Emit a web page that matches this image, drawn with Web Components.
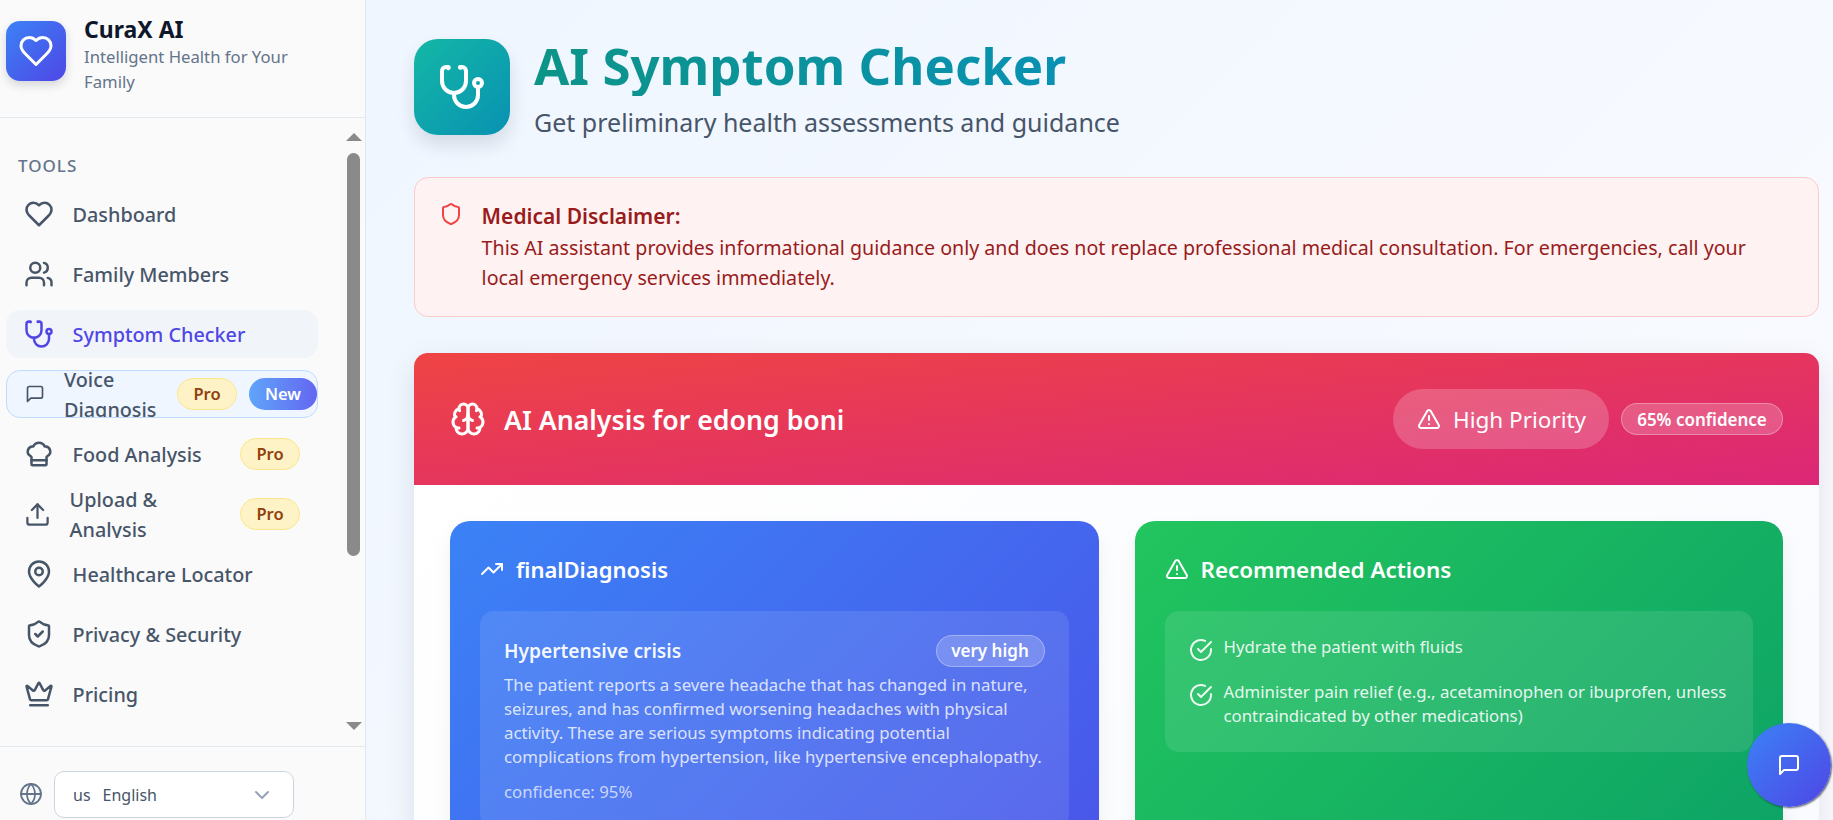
<!DOCTYPE html>
<html>
<head>
<meta charset="utf-8">
<title>CuraX AI</title>
<style>
  html, body { margin: 0; height: 100%; overflow: hidden; }
  body { font-family: "Noto Sans", "Open Sans", sans-serif; color: #0f172a; }
</style>
</head>
<body>
<curax-app></curax-app>

<script>
// lucide style outlines, shared by all the elements
const ICONS = {
  heart: '<path d="M19 14c1.49-1.46 3-3.21 3-5.5A5.5 5.5 0 0 0 16.5 3c-1.76 0-3 .5-4.5 2-1.5-1.5-2.74-2-4.5-2A5.5 5.5 0 0 0 2 8.5c0 2.3 1.5 4.05 3 5.5l7 7Z"/>',
  users: '<path d="M16 21v-2a4 4 0 0 0-4-4H6a4 4 0 0 0-4 4v2"/><path d="M16 3.13a4 4 0 0 1 0 7.75"/><path d="M22 21v-2a4 4 0 0 0-3-3.87"/><circle cx="9" cy="7" r="4"/>',
  stethoscope: '<path d="M4.8 2.3A.3.3 0 1 0 5 2H4a2 2 0 0 0-2 2v5a6 6 0 0 0 6 6 6 6 0 0 0 6-6V4a2 2 0 0 0-2-2h-1a.2.2 0 1 0 .3.3"/><path d="M8 15v1a6 6 0 0 0 6 6 6 6 0 0 0 6-6v-4"/><circle cx="20" cy="10" r="2"/>',
  message: '<path d="M21 15a2 2 0 0 1-2 2H7l-4 4V5a2 2 0 0 1 2-2h14a2 2 0 0 1 2 2z"/>',
  chef: '<path d="M17 21a1 1 0 0 0 1-1v-5.35c0-.457.316-.844.727-1.041a4 4 0 0 0-2.134-7.589 5 5 0 0 0-9.186 0 4 4 0 0 0-2.134 7.589c.411.198.727.585.727 1.041V20a1 1 0 0 0 1 1Z"/><path d="M6 17h12"/>',
  upload: '<path d="M21 15v4a2 2 0 0 1-2 2H5a2 2 0 0 1-2-2v-4"/><polyline points="17 8 12 3 7 8"/><line x1="12" x2="12" y1="3" y2="15"/>',
  pin: '<path d="M20 10c0 6-8 12-8 12s-8-6-8-12a8 8 0 0 1 16 0Z"/><circle cx="12" cy="10" r="3"/>',
  shieldCheck: '<path d="M20 13c0 5-3.5 7.5-7.66 8.95a1 1 0 0 1-.67-.01C7.5 20.5 4 18 4 13V6a1 1 0 0 1 1-1c2 0 4.5-1.2 6.24-2.72a1.17 1.17 0 0 1 1.52 0C14.51 3.81 17 5 19 5a1 1 0 0 1 1 1z"/><path d="m9 12 2 2 4-4"/>',
  shield: '<path d="M20 13c0 5-3.5 7.5-7.66 8.95a1 1 0 0 1-.67-.01C7.5 20.5 4 18 4 13V6a1 1 0 0 1 1-1c2 0 4.5-1.2 6.24-2.72a1.17 1.17 0 0 1 1.52 0C14.51 3.81 17 5 19 5a1 1 0 0 1 1 1z"/>',
  crown: '<path d="M11.562 3.266a.5.5 0 0 1 .876 0L15.39 8.87a1 1 0 0 0 1.516.294L21.183 5.5a.5.5 0 0 1 .798.519l-2.834 10.246a1 1 0 0 1-.956.734H5.81a1 1 0 0 1-.957-.734L2.02 6.02a.5.5 0 0 1 .798-.519l4.276 3.664a1 1 0 0 0 1.516-.294z"/><path d="M5 21h14"/>',
  globe: '<circle cx="12" cy="12" r="10"/><path d="M12 2a14.5 14.5 0 0 0 0 20 14.5 14.5 0 0 0 0-20"/><path d="M2 12h20"/>',
  chevron: '<path d="m6 9 6 6 6-6"/>',
  brain: '<path d="M12 5a3 3 0 1 0-5.997.125 4 4 0 0 0-2.526 5.77 4 4 0 0 0 .556 6.588A4 4 0 1 0 12 18Z"/><path d="M12 5a3 3 0 1 1 5.997.125 4 4 0 0 1 2.526 5.77 4 4 0 0 1-.556 6.588A4 4 0 1 1 12 18Z"/><path d="M15 13a4.5 4.5 0 0 1-3-4 4.5 4.5 0 0 1-3 4"/><path d="M17.599 6.5a3 3 0 0 0 .399-1.375"/><path d="M6.003 5.125A3 3 0 0 0 6.401 6.5"/><path d="M3.477 10.896a4 4 0 0 1 .585-.396"/><path d="M19.938 10.5a4 4 0 0 1 .585.396"/><path d="M6 18a4 4 0 0 1-1.967-.516"/><path d="M19.967 17.484A4 4 0 0 1 18 18"/>',
  alert: '<path d="m21.73 18-8-14a2 2 0 0 0-3.48 0l-8 14A2 2 0 0 0 4 21h16a2 2 0 0 0 1.73-3Z"/><path d="M12 9v4"/><path d="M12 17h.01"/>',
  trending: '<polyline points="22 7 13.5 15.5 8.5 10.5 2 17"/><polyline points="16 7 22 7 22 13"/>',
  check: '<path d="M22 11.08V12a10 10 0 1 1-5.93-9.14"/><path d="m9 11 3 3L22 4"/>'
};

class CxIcon extends HTMLElement {
  connectedCallback() {
    const size = this.getAttribute("size") || 24;
    const stroke = this.getAttribute("stroke") || 2;
    this.attachShadow({ mode: "open" }).innerHTML = `
      <style>
        :host { display: inline-flex; flex: none; width: ${size}px; height: ${size}px; }
        svg { display: block; }
      </style>
      <svg width="${size}" height="${size}" viewBox="0 0 24 24" fill="none" stroke="currentColor"
        stroke-width="${stroke}" stroke-linecap="round" stroke-linejoin="round">${ICONS[this.getAttribute("name")]}</svg>`;
  }
}
customElements.define("cx-icon", CxIcon);

class CxPill extends HTMLElement {
  constructor() {
    super();
    this.attachShadow({ mode: "open" }).innerHTML = `
      <style>
        :host {
          display: inline-flex; align-items: center; justify-content: center; flex: none;
          height: 32px; box-sizing: border-box; border-radius: 16px;
          font-size: 16.5px; font-weight: 600; width: 60px;
          background: #fef3c7; border: 1px solid #fde68a; color: #92400e;
        }
        :host([kind="new"]) {
          width: 68px; border: 0; color: #fff;
          background: linear-gradient(90deg, #60a5fa, #6366f1);
        }
      </style>
      <slot></slot>`;
  }
}
customElements.define("cx-pill", CxPill);

class CxNavItem extends HTMLElement {
  constructor() {
    super();
    this.attachShadow({ mode: "open" }).innerHTML = `
      <style>
        :host {
          display: flex; align-items: center; flex: none; box-sizing: border-box;
          height: 48px; width: 312px; padding: 0 18px 0 18px; border-radius: 14px;
          font-size: 19.8px; font-weight: 500; color: #475569; line-height: 30px;
        }
        :host([active]) { background: #f1f5f9; color: #4f46e5; }
        :host([wrapped]) { overflow: hidden; }
        #ico { display: flex; margin-right: 18.6px; flex: none; }
        #label { flex: 1; min-width: 0; padding-top: 2px; }
        #end { display: flex; gap: 12px; flex: none; }
        :host([voice]) {
          background: #eff6ff; border: 1px solid #bfdbfe; padding: 0 0 0 18px;
        }
        :host([voice]) #ico { margin-right: 19px; }
      </style>
      <span id="ico"><slot name="icon"></slot></span>
      <span id="label"><slot></slot></span>
      <span id="end"><slot name="end"></slot></span>`;
  }
}
customElements.define("cx-nav-item", CxNavItem);

class CxSidebar extends HTMLElement {
  constructor() {
    super();
    this.attachShadow({ mode: "open" }).innerHTML = `
      <style>
        :host {
          display: flex; flex-direction: column; flex: none; box-sizing: border-box;
          width: 366px; height: 100vh; background: #fafafa; border-right: 1px solid #e2e8f0;
        }
        header {
          display: flex; gap: 18px; height: 118px; box-sizing: border-box; flex: none;
          padding: 21px 6px 0; border-bottom: 1px solid #e2e8f0;
        }
        .logo {
          width: 60px; height: 60px; border-radius: 14px; flex: none; color: #fff;
          display: flex; align-items: center; justify-content: center;
          background: linear-gradient(135deg, #3b82f6, #4f46e5);
          box-shadow: 0 4px 10px rgba(15, 23, 42, .16);
        }
        h1 { margin: -8px 0 0; font-size: 23px; line-height: 32px; font-weight: 700; color: #0f172a; }
        .sub { font-size: 16.7px; line-height: 24.5px; color: #64748b; width: 240px; }
        .scroller { flex: 1; min-height: 0; display: flex; }
        nav {
          flex: 1; display: flex; flex-direction: column; gap: 12px;
          padding: 0 0 0 6px; overflow: hidden;
        }
        .tools {
          margin: 36px 0 0 12px; font-size: 17px; line-height: 24px; font-weight: 500;
          letter-spacing: 1px; color: #64748b;
        }
        .bar { width: 23px; flex: none; position: relative; background: #fafafa; }
        .bar i { position: absolute; left: 5px; top: 35px; width: 13px; height: 403px; background: #8a8a8a; border-radius: 7px; }
        .arrow { position: absolute; left: 4px; width: 0; height: 0; border-left: 8px solid transparent; border-right: 8px solid transparent; }
        .up { top: 15px; border-bottom: 8px solid #8a8a8a; }
        .down { bottom: 16px; border-top: 8px solid #8a8a8a; }
        footer {
          flex: none; height: 74px; box-sizing: border-box; border-top: 1px solid #e2e8f0;
          display: flex; align-items: flex-start; gap: 11px; padding: 24px 0 0 19px; color: #64748b;
        }
      </style>
      <header>
        <div class="logo"><cx-icon name="heart" size="36"></cx-icon></div>
        <div>
          <h1>CuraX AI</h1>
          <div class="sub">Intelligent Health for Your Family</div>
        </div>
      </header>
      <div class="scroller">
        <nav>
          <div class="tools">TOOLS</div>
          <slot></slot>
        </nav>
        <div class="bar"><b class="arrow up"></b><i></i><b class="arrow down"></b></div>
      </div>
      <footer>
        <cx-icon name="globe" size="24" stroke="1.8" style="margin-top:11px"></cx-icon>
        <cx-lang></cx-lang>
      </footer>`;
  }
}
customElements.define("cx-sidebar", CxSidebar);

class CxLang extends HTMLElement {
  constructor() {
    super();
    this.attachShadow({ mode: "open" }).innerHTML = `
      <style>
        :host {
          display: flex; align-items: center; gap: 12px; box-sizing: border-box; width: 240px; height: 47px;
          background: #fff; border: 1px solid #cbd5e1; border-radius: 10px; padding: 0 19px 0 18px;
          font-size: 16px; color: #475569;
        }
        .name { flex: 1; }
        cx-icon { color: #94a3b8; }
      </style>
      <span>us</span><span class="name">English</span>
      <cx-icon name="chevron" size="24"></cx-icon>`;
  }
}
customElements.define("cx-lang", CxLang);

class CxPageHead extends HTMLElement {
  constructor() {
    super();
    this.attachShadow({ mode: "open" }).innerHTML = `
      <style>
        :host { display: flex; align-items: flex-start; gap: 24px; height: 96px; }
        .ico {
          width: 96px; height: 96px; border-radius: 24px; flex: none; color: #fff;
          display: flex; align-items: center; justify-content: center;
          background: linear-gradient(135deg, #14b8a6, #0891b2);
          box-shadow: 0 10px 18px rgba(15, 23, 42, .12);
        }
        .txt { margin-top: -5px; }
        h2 {
          margin: 0; font-size: 51px; line-height: 62px; font-weight: 700;
          background: linear-gradient(90deg, #0d9488, #0891b2);
          -webkit-background-clip: text; background-clip: text; color: transparent;
          width: max-content;
        }
        p { margin: 8px 0 0; font-size: 25px; line-height: 36px; color: #475569; }
      </style>
      <div class="ico"><cx-icon name="stethoscope" size="48"></cx-icon></div>
      <div class="txt">
        <h2><slot name="title"></slot></h2>
        <p><slot name="sub"></slot></p>
      </div>`;
  }
}
customElements.define("cx-page-head", CxPageHead);

class CxDisclaimer extends HTMLElement {
  constructor() {
    super();
    this.attachShadow({ mode: "open" }).innerHTML = `
      <style>
        :host {
          display: flex; gap: 18.6px; box-sizing: border-box; height: 140px; margin-top: 42px;
          padding: 24px 32px 0 24px; background: #fef2f2; border: 1px solid #fecaca; border-radius: 14px;
          color: #991b1b;
        }
        cx-icon { color: #ef4444; }
        b { display: block; font-size: 21px; line-height: 28px; font-weight: 600; margin-bottom: 3px; }
        div { font-size: 19.65px; line-height: 30px; }
      </style>
      <cx-icon name="shield" size="24"></cx-icon>
      <div><b><slot name="title"></slot></b><slot></slot></div>`;
  }
}
customElements.define("cx-disclaimer", CxDisclaimer);

class CxAnalysis extends HTMLElement {
  constructor() {
    super();
    this.attachShadow({ mode: "open" }).innerHTML = `
      <style>
        :host {
          display: block; margin-top: 36px; border-radius: 14px 14px 0 0;
          background: linear-gradient(135deg, #fff, #f8fafe);
          box-shadow: 0 10px 30px rgba(15, 23, 42, .1);
        }
        .top {
          height: 132px; box-sizing: border-box; padding: 0 36px; color: #fff;
          display: flex; align-items: center; border-radius: 14px 14px 0 0;
          background: linear-gradient(to bottom right, #ef4444, #db2777);
        }
        .name { flex: 1; display: flex; align-items: center; gap: 18px; font-size: 26.7px; font-weight: 600; }
        .prio {
          display: flex; align-items: center; gap: 12px; box-sizing: border-box; height: 60px; width: 216px;
          padding-left: 24px; border-radius: 30px; background: rgba(255, 255, 255, .2); font-size: 22.5px;
        }
        .conf {
          display: flex; align-items: center; justify-content: center; box-sizing: border-box;
          height: 32px; width: 162px; margin-left: 12px; border-radius: 16px; font-size: 17px; font-weight: 600;
          background: rgba(255, 255, 255, .2); border: 1px solid rgba(255, 255, 255, .3);
        }
        .cols {
          display: grid; grid-template-columns: 1fr 1fr; gap: 36px;
          padding: 36px 36px 60px;
        }
      </style>
      <div class="top">
        <div class="name"><cx-icon name="brain" size="36"></cx-icon><slot name="title"></slot></div>
        <div class="prio"><cx-icon name="alert" size="24"></cx-icon><slot name="priority"></slot></div>
        <div class="conf"><slot name="confidence"></slot></div>
      </div>
      <div class="cols"><slot></slot></div>`;
  }
}
customElements.define("cx-analysis", CxAnalysis);

class CxPanel extends HTMLElement {
  connectedCallback() {
    const icon = this.getAttribute("icon");
    this.attachShadow({ mode: "open" }).innerHTML = `
      <style>
        :host {
          display: block; box-sizing: border-box; height: 700px; padding: 30px 30px 0; color: #fff;
          border-radius: 20px; background: linear-gradient(135deg, #3b82f6, #4f46e5);
          box-shadow: 0 10px 20px rgba(15, 23, 42, .06);
        }
        :host([tone="green"]) { background: linear-gradient(135deg, #22c55e, #059669); }
        .h { display: flex; align-items: center; gap: 12px; height: 36px; font-size: 22px; font-weight: 600; }
        :host([tone="green"]) .h { font-size: 22.4px; }
        .in { margin-top: 24px; padding: 24px; border-radius: 14px; background: rgba(255, 255, 255, .1); }
      </style>
      <div class="h"><cx-icon name="${icon}" size="24"></cx-icon>${this.getAttribute("heading")}</div>
      <div class="in"><slot></slot></div>`;
  }
}
customElements.define("cx-panel", CxPanel);

class CxDiagnosis extends HTMLElement {
  connectedCallback() {
    this.attachShadow({ mode: "open" }).innerHTML = `
      <style>
        :host { display: block; color: rgba(255, 255, 255, .8); font-size: 16.8px; line-height: 24px; }
        .r { display: flex; justify-content: space-between; align-items: center; height: 32px; margin-bottom: 6px; }
        b { font-size: 19.2px; font-weight: 600; color: rgba(255, 255, 255, .95); }
        .sev {
          display: flex; align-items: center; justify-content: center; box-sizing: border-box; height: 32px; width: 109px;
          border-radius: 16px; background: rgba(255, 255, 255, .2); border: 1px solid rgba(255, 255, 255, .3);
          color: #fff; font-size: 17px; font-weight: 600;
        }
        .c { margin-top: 11px; color: rgba(255, 255, 255, .7); }
      </style>
      <div class="r"><b>${this.getAttribute("name")}</b><span class="sev">${this.getAttribute("level")}</span></div>
      <slot></slot>
      <div class="c">confidence: ${this.getAttribute("confidence")}</div>`;
  }
}
customElements.define("cx-diagnosis", CxDiagnosis);

class CxAction extends HTMLElement {
  constructor() {
    super();
    this.attachShadow({ mode: "open" }).innerHTML = `
      <style>
        :host {
          display: flex; gap: 11px; font-size: 16.8px; line-height: 24px; color: rgba(255, 255, 255, .9);
          margin-bottom: 18px;
        }
        :host(:last-child) { margin-bottom: 0; }
        cx-icon { margin-top: 3px; }
      </style>
      <cx-icon name="check" size="24"></cx-icon>
      <span><slot></slot></span>`;
  }
}
customElements.define("cx-action", CxAction);

class CxChat extends HTMLElement {
  constructor() {
    super();
    this.attachShadow({ mode: "open" }).innerHTML = `
      <style>
        :host {
          position: fixed; left: 1747px; top: 723px; width: 84px; height: 84px; border-radius: 50%;
          display: flex; align-items: center; justify-content: center; color: #fff;
          background: linear-gradient(135deg, #3b82f6, #4f46e5);
          box-shadow: 1px 1px 2px rgba(15, 23, 42, .7);
        }
      </style>
      <cx-icon name="message" size="24"></cx-icon>`;
  }
}
customElements.define("cx-chat", CxChat);

class CuraxApp extends HTMLElement {
  constructor() {
    super();
    this.attachShadow({ mode: "open" }).innerHTML = `
      <style>
        :host { display: flex; height: 100vh; overflow: hidden; }
        main {
          flex: 1; min-width: 0; height: 100vh; overflow: hidden; box-sizing: border-box;
          padding: 39px 14px 0 48px; background: linear-gradient(135deg, #eff6ff, #fafbff);
        }
      </style>
      <cx-sidebar>
        <cx-nav-item><cx-icon slot="icon" name="heart" size="30"></cx-icon>Dashboard</cx-nav-item>
        <cx-nav-item><cx-icon slot="icon" name="users" size="30"></cx-icon>Family Members</cx-nav-item>
        <cx-nav-item active><cx-icon slot="icon" name="stethoscope" size="30"></cx-icon>Symptom Checker</cx-nav-item>
        <cx-nav-item voice wrapped><cx-icon slot="icon" name="message" size="20"></cx-icon>Voice Diagnosis<cx-pill slot="end">Pro</cx-pill><cx-pill slot="end" kind="new">New</cx-pill></cx-nav-item>
        <cx-nav-item><cx-icon slot="icon" name="chef" size="30"></cx-icon>Food Analysis<cx-pill slot="end">Pro</cx-pill></cx-nav-item>
        <cx-nav-item wrapped><cx-icon slot="icon" name="upload" size="27"></cx-icon>Upload &amp;<br>Analysis<cx-pill slot="end">Pro</cx-pill></cx-nav-item>
        <cx-nav-item><cx-icon slot="icon" name="pin" size="30"></cx-icon>Healthcare Locator</cx-nav-item>
        <cx-nav-item><cx-icon slot="icon" name="shieldCheck" size="30"></cx-icon>Privacy &amp; Security</cx-nav-item>
        <cx-nav-item><cx-icon slot="icon" name="crown" size="30"></cx-icon>Pricing</cx-nav-item>
      </cx-sidebar>
      <main>
        <cx-page-head>
          <span slot="title">AI Symptom Checker</span>
          <span slot="sub">Get preliminary health assessments and guidance</span>
        </cx-page-head>
        <cx-disclaimer>
          <span slot="title">Medical Disclaimer:</span>
          This AI assistant provides informational guidance only and does not replace professional medical consultation. For emergencies, call your local emergency services immediately.
        </cx-disclaimer>
        <cx-analysis>
          <span slot="title">AI Analysis for edong boni</span>
          <span slot="priority">High Priority</span>
          <span slot="confidence">65% confidence</span>
          <cx-panel icon="trending" heading="finalDiagnosis">
            <cx-diagnosis name="Hypertensive crisis" level="very high" confidence="95%">The patient reports a severe headache that has changed in nature, seizures, and has confirmed worsening headaches with physical activity. These are serious symptoms indicating potential complications from hypertension, like hypertensive encephalopathy.</cx-diagnosis>
          </cx-panel>
          <cx-panel tone="green" icon="alert" heading="Recommended Actions">
            <cx-action>Hydrate the patient with fluids</cx-action>
            <cx-action>Administer pain relief (e.g., acetaminophen or ibuprofen, unless contraindicated by other medications)</cx-action>
          </cx-panel>
        </cx-analysis>
      </main>
      <cx-chat></cx-chat>`;
  }
}
customElements.define("curax-app", CuraxApp);
</script>
</body>
</html>
